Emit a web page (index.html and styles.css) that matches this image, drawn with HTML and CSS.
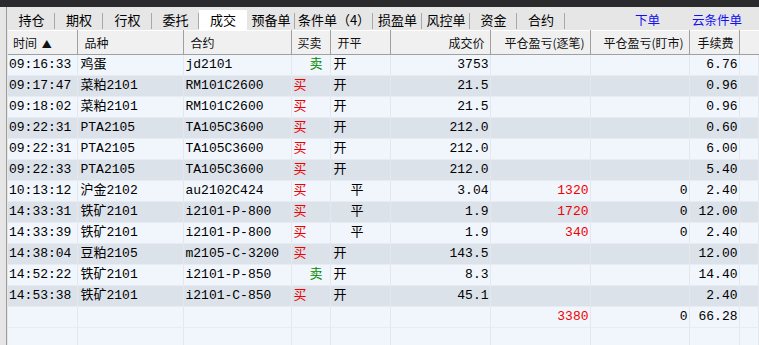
FILE: index.html
```html
<!DOCTYPE html>
<html lang="zh-CN">
<head>
  <meta charset="UTF-8">
  <title>成交</title>
  <link rel="stylesheet" href="styles.css">
</head>
<body>
  <div class="topbar"></div>
  <div class="panel">
    <div class="tabbar">
      <div class="tab" style="width:47px">持仓</div>
      <div class="tab" style="width:48px">期权</div>
      <div class="tab" style="width:49px">行权</div>
      <div class="tab" style="width:47px">委托</div>
      <div class="tab active" style="width:48px">成交</div>
      <div class="tab" style="width:48px">预备单</div>
      <div class="tab" style="width:78px">条件单（4）</div>
      <div class="tab" style="width:49px">损盈单</div>
      <div class="tab" style="width:48px">风控单</div>
      <div class="tab" style="width:47px">资金</div>
      <div class="tab" style="width:48px">合约</div>
      <a class="link link-order" href="#">下单</a>
      <a class="link" href="#">云条件单</a>
    </div>

    <table class="grid">
      <colgroup>
        <col style="width:69px"><col style="width:106px"><col style="width:108px">
        <col style="width:39px"><col style="width:60px"><col style="width:100px">
        <col style="width:100px"><col style="width:99px"><col style="width:50px"><col>
      </colgroup>
      <thead>
        <tr>
          <th class="h-time">时间 <span class="sort">▲</span></th>
          <th>品种</th>
          <th>合约</th>
          <th class="h-side">买卖</th>
          <th>开平</th>
          <th class="num">成交价</th>
          <th class="num">平仓盈亏(逐笔)</th>
          <th class="num">平仓盈亏(盯市)</th>
          <th class="num">手续费</th>
          <th></th>
        </tr>
      </thead>
      <tbody>
        <tr><td class="t">09:16:33</td><td class="p">鸡蛋</td><td class="c">jd2101</td><td class="sell">卖</td><td class="open">开</td><td class="num">3753</td><td class="num red"></td><td class="num"></td><td class="num">6.76</td><td></td></tr>
        <tr><td class="t">09:17:47</td><td class="p">菜粕2101</td><td class="c">RM101C2600</td><td class="buy">买</td><td class="open">开</td><td class="num">21.5</td><td class="num red"></td><td class="num"></td><td class="num">0.96</td><td></td></tr>
        <tr><td class="t">09:18:02</td><td class="p">菜粕2101</td><td class="c">RM101C2600</td><td class="buy">买</td><td class="open">开</td><td class="num">21.5</td><td class="num red"></td><td class="num"></td><td class="num">0.96</td><td></td></tr>
        <tr><td class="t">09:22:31</td><td class="p">PTA2105</td><td class="c">TA105C3600</td><td class="buy">买</td><td class="open">开</td><td class="num">212.0</td><td class="num red"></td><td class="num"></td><td class="num">0.60</td><td></td></tr>
        <tr><td class="t">09:22:31</td><td class="p">PTA2105</td><td class="c">TA105C3600</td><td class="buy">买</td><td class="open">开</td><td class="num">212.0</td><td class="num red"></td><td class="num"></td><td class="num">6.00</td><td></td></tr>
        <tr><td class="t">09:22:33</td><td class="p">PTA2105</td><td class="c">TA105C3600</td><td class="buy">买</td><td class="open">开</td><td class="num">212.0</td><td class="num red"></td><td class="num"></td><td class="num">5.40</td><td></td></tr>
        <tr><td class="t">10:13:12</td><td class="p">沪金2102</td><td class="c">au2102C424</td><td class="buy">买</td><td class="close">平</td><td class="num">3.04</td><td class="num red">1320</td><td class="num">0</td><td class="num">2.40</td><td></td></tr>
        <tr><td class="t">14:33:31</td><td class="p">铁矿2101</td><td class="c">i2101-P-800</td><td class="buy">买</td><td class="close">平</td><td class="num">1.9</td><td class="num red">1720</td><td class="num">0</td><td class="num">12.00</td><td></td></tr>
        <tr><td class="t">14:33:39</td><td class="p">铁矿2101</td><td class="c">i2101-P-800</td><td class="buy">买</td><td class="close">平</td><td class="num">1.9</td><td class="num red">340</td><td class="num">0</td><td class="num">2.40</td><td></td></tr>
        <tr><td class="t">14:38:04</td><td class="p">豆粕2105</td><td class="c">m2105-C-3200</td><td class="buy">买</td><td class="open">开</td><td class="num">143.5</td><td class="num red"></td><td class="num"></td><td class="num">12.00</td><td></td></tr>
        <tr><td class="t">14:52:22</td><td class="p">铁矿2101</td><td class="c">i2101-P-850</td><td class="sell">卖</td><td class="open">开</td><td class="num">8.3</td><td class="num red"></td><td class="num"></td><td class="num">14.40</td><td></td></tr>
        <tr><td class="t">14:53:38</td><td class="p">铁矿2101</td><td class="c">i2101-C-850</td><td class="buy">买</td><td class="open">开</td><td class="num">45.1</td><td class="num red"></td><td class="num"></td><td class="num">2.40</td><td></td></tr>
        <tr class="total"><td></td><td></td><td></td><td></td><td></td><td class="num"></td><td class="num red">3380</td><td class="num">0</td><td class="num">66.28</td><td></td></tr>
        <tr class="empty"><td></td><td></td><td></td><td></td><td></td><td></td><td></td><td></td><td></td><td></td></tr>
      </tbody>
    </table>
  </div>
</body>
</html>
```

FILE: styles.css
```css
body {
  margin: 0;
  width: 759px;
  height: 345px;
  overflow: hidden;
  background-color: #e6e6e6;
  font-family: "Noto Sans CJK SC", sans-serif;
}
.topbar {
  height: 7px;
  background-color: #2b2b2e;
}
.panel {
  margin-left: 6px;
  border-left: 1px solid #9c9c9c;
  padding-left: 1px;
  background-color: #e6e6e6;
  height: 338px;
}
.tabbar {
  display: flex;
  align-items: flex-end;
  height: 23px;
  box-sizing: border-box;
  padding-top: 3px;
}
.tab {
  box-sizing: border-box;
  height: 20px;
  line-height: 20px;
  text-align: center;
  font-size: 13px;
  color: #000;
  position: relative;
}
.tab::after {
  content: "";
  position: absolute;
  right: 0;
  top: 3px;
  bottom: 1px;
  width: 1px;
  background-color: #a8a8a8;
}
.tab.active {
  background-color: #fff;
}
.tab.active::after {
  display: none;
}
.link {
  font-size: 12.5px;
  color: #1010f0;
  text-decoration: none;
  line-height: 20px;
  height: 20px;
  margin-left: 32px;
}
.link-order {
  margin-left: 70px;
}
.grid {
  border-collapse: collapse;
  table-layout: fixed;
  width: 751px;
  border-top: 1px solid #fff;
  background-color: #f0f6fc;
}
.grid th {
  height: 23px;
  padding: 0 0 0 7px;
  font-size: 12px;
  font-weight: normal;
  text-align: left;
  color: #111;
  background-color: #f0f0f0;
  border-right: 1px solid #a0a0a0;
  border-bottom: 1px solid #a0a0a0;
  white-space: nowrap;
  overflow: hidden;
}
.grid th.h-time {
  padding-left: 5px;
}
.grid th.h-side {
  padding-left: 6px;
}
.grid th.num {
  text-align: right;
  padding: 0 5px 0 0;
}
.grid th:last-child {
  border-right: none;
}
.sort {
  font-size: 10px;
  margin-left: 2px;
}
.grid td {
  height: 20px;
  line-height: 20px;
  padding: 0 0 0 2px;
  font-family: "Liberation Mono", "Noto Sans CJK SC", monospace;
  font-size: 13px;
  color: #000;
  border-right: 1px solid #e4e8ee;
  border-bottom: 1px solid #e8ecf2;
  white-space: nowrap;
  overflow: hidden;
}
.grid tbody tr:nth-child(even) td {
  background-color: #dce2ea;
}
.grid tbody tr:nth-child(odd) td {
  background-color: #f0f6fc;
}
.grid tbody tr.empty td {
  background-color: #f0f6fc;
}
.grid td.t {
  padding-left: 1px;
}
.grid td.p {
  padding-left: 3px;
}
.grid td.num {
  text-align: right;
  padding: 0 1px 0 0;
}
.grid td.buy {
  color: #f00000;
  padding-left: 2px;
}
.grid td.sell {
  color: #008a00;
  padding-left: 18px;
}
.grid td.open {
  padding-left: 3px;
}
.grid td.close {
  padding-left: 20px;
}
.grid td.red {
  color: #f00000;
}
```
